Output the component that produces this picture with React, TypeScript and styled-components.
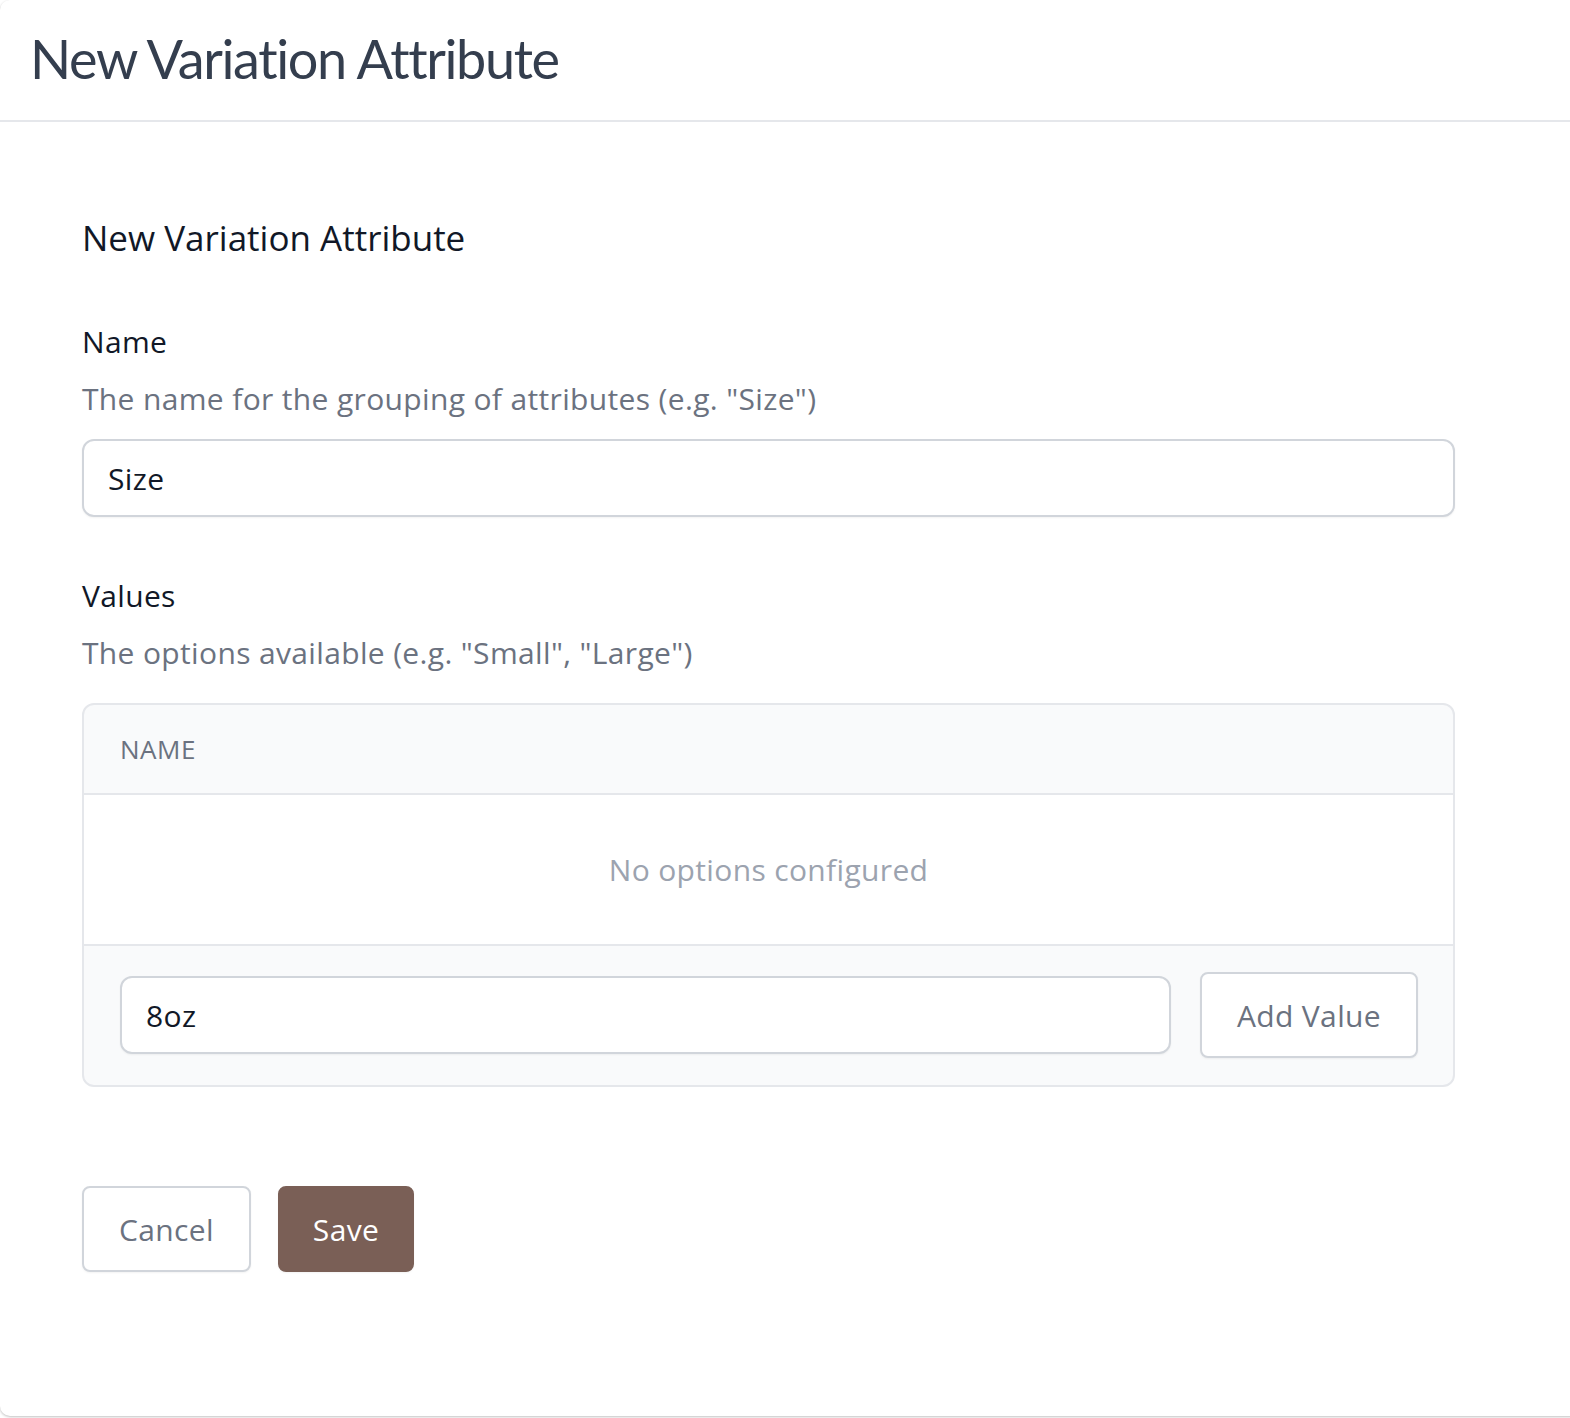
import React from "react";
import styled, { createGlobalStyle } from "styled-components";

const GlobalStyle = createGlobalStyle`
  html, body {
    margin: 0;
    padding: 0;
    background: #ffffff;
  }
  body {
    font-family: "Open Sans", "Noto Sans", sans-serif;
    -webkit-font-smoothing: antialiased;
  }
  * { box-sizing: border-box; }
`;

const Page = styled.div`
  overflow: hidden;
  padding-bottom: 4px;
`;

const Card = styled.div`
  margin-right: -16px;
  background: #ffffff;
  border-radius: 10px;
  box-shadow: 0 1px 3px rgba(0, 0, 0, 0.18), 0 1px 2px rgba(0, 0, 0, 0.08);
`;

const Header = styled.header`
  height: 122px;
  display: flex;
  align-items: center;
  padding: 0 30px;
  border-bottom: 2px solid #e5e7eb;
`;

const PageTitle = styled.h1`
  margin: 0;
  font-family: "Lato", "Open Sans", sans-serif;
  font-weight: 400;
  font-size: 54px;
  letter-spacing: -1.35px;
  line-height: 64px;
  color: #343e4e;
  padding-bottom: 2px;
`;

const Body = styled.div`
  padding: 88px 0 144px 82px;
  width: 1455px;
`;

const SectionTitle = styled.h2`
  margin: 0;
  font-size: 35px;
  line-height: 56px;
  font-weight: 400;
  color: #111827;
`;

const Field = styled.div<{ $top: number }>`
  margin-top: ${(p) => p.$top}px;
  display: flex;
  flex-direction: column;
`;

const Label = styled.label`
  font-size: 30px;
  letter-spacing: 0.35px;
  line-height: 40px;
  color: #111827;
`;

const Hint = styled.p<{ $gap: number }>`
  margin: 17px 0 ${(p) => p.$gap}px;
  font-size: 30px;
  letter-spacing: 0.35px;
  line-height: 40px;
  color: #6b7280;
`;

const TextInput = styled.input`
  width: 100%;
  height: 78px;
  padding: 0 24px;
  font-family: inherit;
  font-size: 30px;
  letter-spacing: 0.35px;
  color: #111827;
  background: #ffffff;
  border: 2px solid #d1d5db;
  border-radius: 12px;
  box-shadow: 0 1px 2px rgba(0, 0, 0, 0.05);
  outline: none;
`;

const ValuesTable = styled.div`
  border: 2px solid #e5e7eb;
  border-radius: 12px;
  background: #f9fafb;
  overflow: hidden;
`;

const TableHead = styled.div`
  height: 90px;
  display: flex;
  align-items: center;
  padding: 0 36px;
  font-size: 26px;
  letter-spacing: 0.5px;
  text-transform: uppercase;
  color: #6b7280;
  border-bottom: 2px solid #e5e7eb;
`;

const EmptyRow = styled.div`
  height: 151px;
  display: flex;
  align-items: center;
  justify-content: center;
  background: #ffffff;
  font-size: 30px;
  letter-spacing: 0.35px;
  color: #9ca3af;
  border-bottom: 2px solid #e5e7eb;
`;

const AddRow = styled.div`
  display: flex;
  align-items: center;
  gap: 29px;
  padding: 26px 35px 27px 36px;
`;

const Button = styled.button<{ $primary?: boolean }>`
  height: 86px;
  padding: 0 ${(p) => (p.$primary ? 33 : 35)}px;
  font-family: inherit;
  font-size: 30px;
  letter-spacing: 0.35px;
  border-radius: 8px;
  cursor: pointer;
  white-space: nowrap;
  flex-shrink: 0;
  color: ${(p) => (p.$primary ? "#ffffff" : "#6b7280")};
  background: ${(p) => (p.$primary ? "#7a5f56" : "#ffffff")};
  border: 2px solid ${(p) => (p.$primary ? "#7a5f56" : "#d1d5db")};
  box-shadow: 0 1px 2px rgba(0, 0, 0, 0.05);
`;

const Actions = styled.div`
  margin-top: 99px;
  display: flex;
  gap: 27px;
`;

export default function App() {
  return (
    <>
      <GlobalStyle />
      <Page>
        <Card>
          <Header>
            <PageTitle>New Variation Attribute</PageTitle>
          </Header>
          <Body>
            <SectionTitle>New Variation Attribute</SectionTitle>

            <Field $top={56}>
              <Label htmlFor="attr-name">Name</Label>
              <Hint $gap={20}>The name for the grouping of attributes (e.g. "Size")</Hint>
              <TextInput id="attr-name" defaultValue="Size" />
            </Field>

            <Field $top={59}>
              <Label>Values</Label>
              <Hint $gap={30}>The options available (e.g. "Small", "Large")</Hint>
              <ValuesTable>
                <TableHead>Name</TableHead>
                <EmptyRow>No options configured</EmptyRow>
                <AddRow>
                  <TextInput defaultValue="8oz" />
                  <Button>Add Value</Button>
                </AddRow>
              </ValuesTable>
            </Field>

            <Actions>
              <Button>Cancel</Button>
              <Button $primary>Save</Button>
            </Actions>
          </Body>
        </Card>
      </Page>
    </>
  );
}
